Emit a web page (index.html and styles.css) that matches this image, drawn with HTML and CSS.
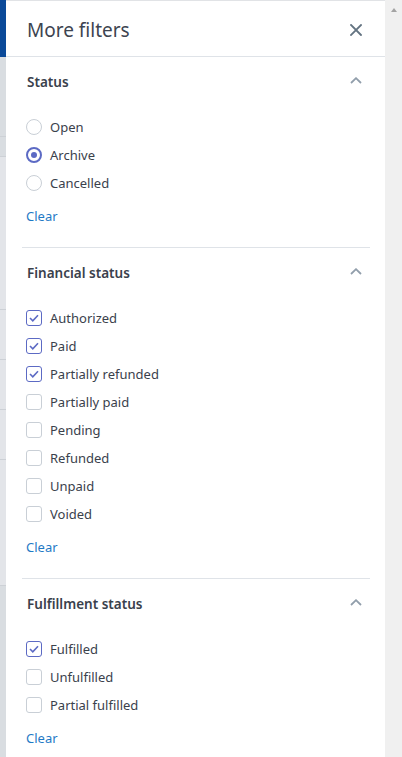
FILE: index.html
```html
<!DOCTYPE html>
<html lang="en">
<head>
<meta charset="utf-8">
<title>More filters</title>
<link rel="stylesheet" href="styles.css">
</head>
<body>
<div class="page">
  <div class="behind">
    <div class="behind-top"></div>
    <div class="behind-row dark h80"></div>
    <div class="behind-row dark h20"></div>
    <div class="behind-row h153"></div>
    <div class="behind-row h50"></div>
    <div class="behind-row h50"></div>
    <div class="behind-row h50"></div>
    <div class="behind-row h126"></div>
    <div class="behind-rest"></div>
  </div>

  <aside class="sheet">
    <header class="sheet-header">
      <h1 class="sheet-title">More filters</h1>
      <button class="icon-btn close" aria-label="Close">
        <svg viewBox="0 0 12 12" width="12" height="12"><path d="M1 1 L11 11 M11 1 L1 11" stroke="#637381" stroke-width="1.8" stroke-linecap="square" fill="none"/></svg>
      </button>
    </header>

    <section class="filter">
      <div class="filter-head">
        <h2>Status</h2>
        <svg class="chev" viewBox="0 0 12 7" width="12" height="7"><path d="M1 6 L6 1.2 L11 6" stroke="#919eab" stroke-width="1.8" fill="none"/></svg>
      </div>
      <ul class="options">
        <li><span class="radio"></span>Open</li>
        <li><span class="radio on"></span>Archive</li>
        <li><span class="radio"></span>Cancelled</li>
      </ul>
      <a class="clear" href="#">Clear</a>
    </section>

    <section class="filter">
      <div class="filter-head">
        <h2>Financial status</h2>
        <svg class="chev" viewBox="0 0 12 7" width="12" height="7"><path d="M1 6 L6 1.2 L11 6" stroke="#919eab" stroke-width="1.8" fill="none"/></svg>
      </div>
      <ul class="options">
        <li><span class="check on"><svg viewBox="0 0 10 8" width="10" height="8"><path d="M1 4 L3.8 6.8 L9 1.2" stroke="#5c6ac4" stroke-width="1.6" fill="none"/></svg></span>Authorized</li>
        <li><span class="check on"><svg viewBox="0 0 10 8" width="10" height="8"><path d="M1 4 L3.8 6.8 L9 1.2" stroke="#5c6ac4" stroke-width="1.6" fill="none"/></svg></span>Paid</li>
        <li><span class="check on"><svg viewBox="0 0 10 8" width="10" height="8"><path d="M1 4 L3.8 6.8 L9 1.2" stroke="#5c6ac4" stroke-width="1.6" fill="none"/></svg></span>Partially refunded</li>
        <li><span class="check"></span>Partially paid</li>
        <li><span class="check"></span>Pending</li>
        <li><span class="check"></span>Refunded</li>
        <li><span class="check"></span>Unpaid</li>
        <li><span class="check"></span>Voided</li>
      </ul>
      <a class="clear" href="#">Clear</a>
    </section>

    <section class="filter">
      <div class="filter-head">
        <h2>Fulfillment status</h2>
        <svg class="chev" viewBox="0 0 12 7" width="12" height="7"><path d="M1 6 L6 1.2 L11 6" stroke="#919eab" stroke-width="1.8" fill="none"/></svg>
      </div>
      <ul class="options">
        <li><span class="check on"><svg viewBox="0 0 10 8" width="10" height="8"><path d="M1 4 L3.8 6.8 L9 1.2" stroke="#5c6ac4" stroke-width="1.6" fill="none"/></svg></span>Fulfilled</li>
        <li><span class="check"></span>Unfulfilled</li>
        <li><span class="check"></span>Partial fulfilled</li>
      </ul>
      <a class="clear" href="#">Clear</a>
    </section>
  </aside>

  <div class="scrollbar">
    <span class="arrow-up"></span>
  </div>
</div>
</body>
</html>
```

FILE: styles.css
```css
* { box-sizing: border-box; }
html, body { margin: 0; padding: 0; }
body {
  font-family: "Noto Sans", "Open Sans", sans-serif;
  color: #3a414c;
  background: #fff;
}
.page {
  display: flex;
  width: 402px;
  height: 757px;
  overflow: hidden;
}

/* background page peeking on the left */
.behind {
  width: 6px;
  flex: none;
  display: flex;
  flex-direction: column;
  background: #e3e5e9;
}
.behind-top { height: 57px; background: #0b4a99; flex: none; }
.behind-row { flex: none; border-bottom: 1px solid #cdd1d6; }
.behind-row.dark { background: #d9dde1; }
.h80 { height: 80px; }
.h20 { height: 20px; }
.h153 { height: 153px; }
.h50 { height: 50px; }
.h126 { height: 126px; }
.behind-rest { flex: 1; background: #d9dde1; }

/* sheet */
.sheet {
  width: 379px;
  flex: none;
  background: #fff;
  border-top: 1px solid #e1e3e6;
  height: 757px;
  overflow: hidden;
}
.sheet-header {
  height: 56px;
  border-bottom: 1px solid #dfe3e8;
  display: flex;
  align-items: center;
  justify-content: space-between;
  padding: 0 23px 0 21px;
}
.sheet-title {
  margin: 0;
  font-size: 19px;
  font-weight: 400;
  color: #3d4450;
  line-height: 24px;
  position: relative;
  top: 1px;
}
.icon-btn {
  border: 0;
  background: none;
  padding: 0;
  width: 12px;
  height: 12px;
  display: flex;
  position: relative;
  top: 1px;
}

.filter {
  margin: 0 15px 0 16px;
  padding: 0 0 21px 4px;
  border-bottom: 1px solid #dfe3e8;
}
.filter-head {
  height: 48px;
  display: flex;
  align-items: center;
  justify-content: space-between;
  padding-left: 1px;
  padding-right: 8px;
}
.filter-head h2 {
  margin: 0;
  font-size: 13.5px;
  font-weight: 600;
  color: #3a414c;
  position: relative;
  top: 1px;
}
.chev { position: relative; top: -1px; }

.options {
  list-style: none;
  margin: 0;
  padding: 8px 0 0 0;
}
.options li {
  height: 28px;
  display: flex;
  align-items: center;
  font-size: 13px;
  color: #3a414c;
}
.radio, .check {
  width: 16px;
  height: 16px;
  flex: none;
  margin-right: 8px;
  border: 1px solid #c9cfd6;
  background: #fff;
  display: flex;
  align-items: center;
  justify-content: center;
}
.radio { border-radius: 50%; }
.radio.on { border: 2px solid #5c6ac4; }
.radio.on::after {
  content: "";
  width: 6px;
  height: 6px;
  border-radius: 50%;
  background: #5c6ac4;
}
.check { border-radius: 3px; }
.check.on { border: 1.5px solid #5c6ac4; }

.clear {
  display: block;
  margin-top: 9px;
  height: 20px;
  line-height: 20px;
  font-size: 13px;
  color: #1f7ac6;
  text-decoration: none;
  width: max-content;
}

/* scrollbar */
.scrollbar {
  flex: 1;
  background: #f0f0f0;
  display: flex;
  justify-content: center;
  padding-top: 8px;
}
.arrow-up {
  width: 0;
  height: 0;
  border-left: 3.5px solid transparent;
  border-right: 3.5px solid transparent;
  border-bottom: 4px solid #a3a3a3;
}
```
